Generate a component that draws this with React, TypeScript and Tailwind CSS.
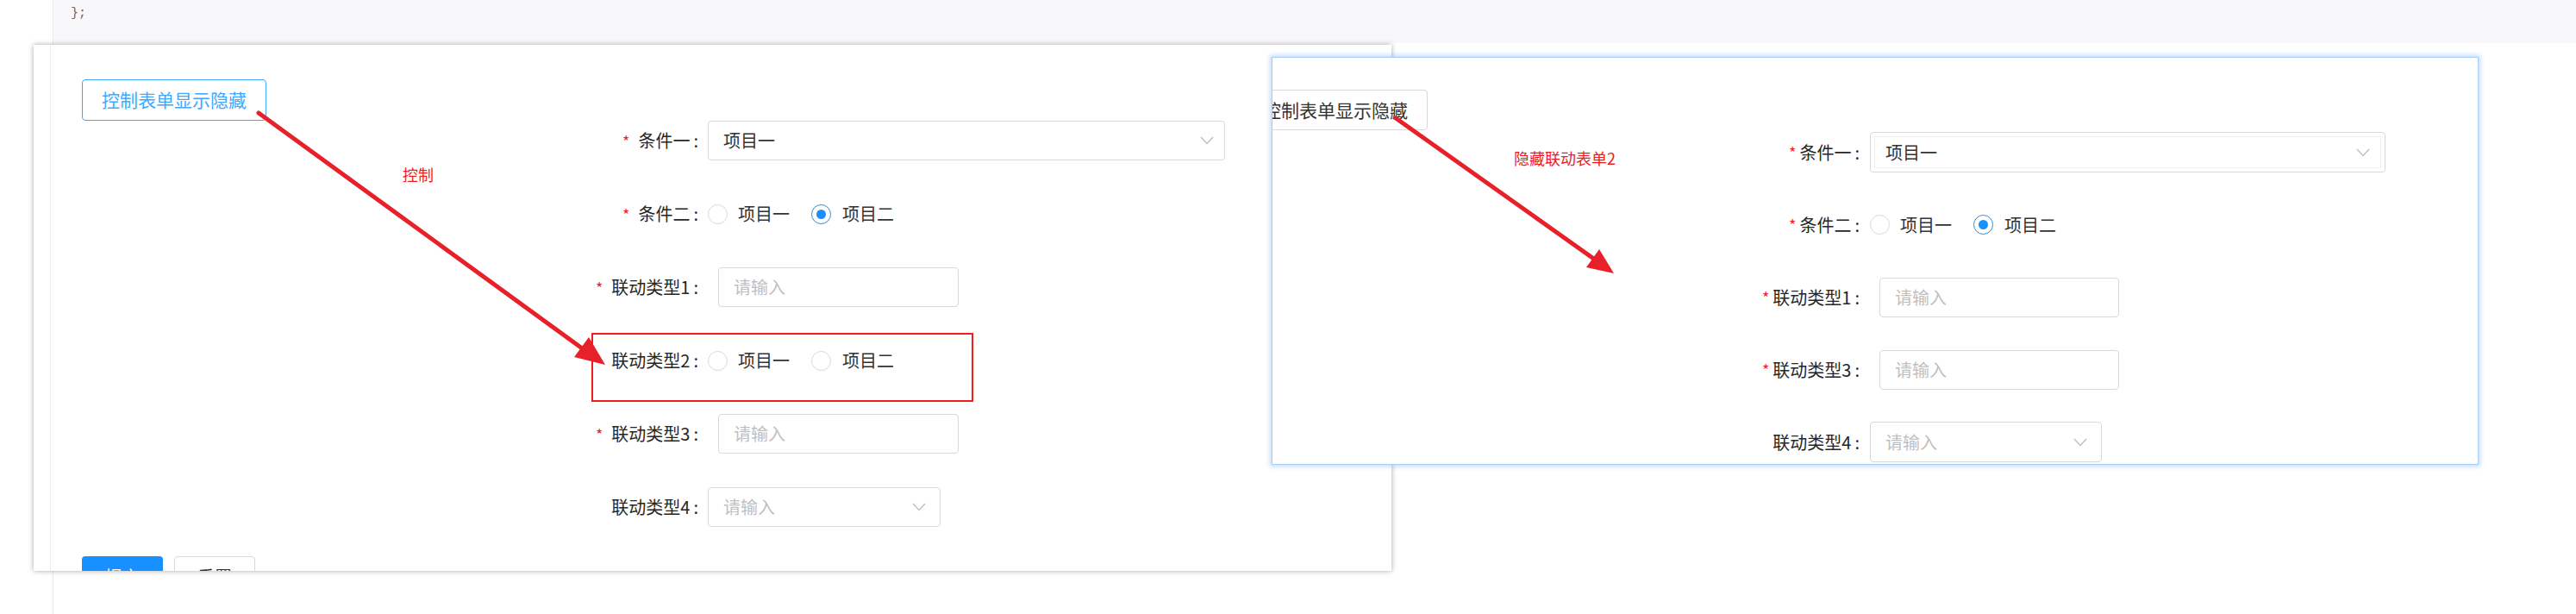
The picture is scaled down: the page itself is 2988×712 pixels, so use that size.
const Star = ({ gap }: { gap: string }) => (
  <span className={`text-[#f5222d] text-[18px] ${gap}`}>*</span>
);

const Chevron = () => (
  <svg width="16" height="10" viewBox="0 0 16 10" className="shrink-0">
    <polyline points="1,1 8,8.5 15,1" fill="none" stroke="#bfbfbf" strokeWidth="1.4" />
  </svg>
);

const Radio = ({ checked }: { checked?: boolean }) => (
  <span
    className={`w-[23px] h-[23px] rounded-full border flex items-center justify-center shrink-0 ${
      checked ? "border-[#1890ff] border-[1.5px]" : "border-[#d9d9d9]"
    }`}
  >
    {checked && <span className="w-[11px] h-[11px] rounded-full bg-[#1890ff]" />}
  </span>
);

const RadioGroup = ({ value }: { value?: number }) => (
  <div className="flex items-center text-[20px] text-[#333]">
    <Radio checked={value === 1} />
    <span className="ml-[12px]">项目一</span>
    <span className="ml-[25px]">
      <Radio checked={value === 2} />
    </span>
    <span className="ml-[13px]">项目二</span>
  </div>
);

const Card1Row = ({
  label,
  required,
  children,
}: {
  label: string;
  required?: boolean;
  children: React.ReactNode;
}) => (
  <div className="flex items-center h-[46px] shrink-0">
    <label className="w-[715px] flex justify-end items-center text-[20px] text-[#262626]">
      {required && <Star gap="mr-[10px]" />}
      <span>{label}</span>
      <span className="ml-[4px]">:</span>
    </label>
    <div className="ml-[11px]">{children}</div>
  </div>
);

const Card2Row = ({
  label,
  required,
  children,
}: {
  label: string;
  required?: boolean;
  children: React.ReactNode;
}) => (
  <div className="flex items-center h-[47px] shrink-0">
    <label className="w-[681px] flex justify-end items-center text-[20px] text-[#262626]">
      {required && <Star gap="mr-[4px]" />}
      <span>{label}</span>
      <span className="ml-[4px]">:</span>
    </label>
    <div className="ml-[12px]">{children}</div>
  </div>
);

export default function App() {
  return (
    <div className="relative w-[2988px] h-[712px] bg-white overflow-hidden font-['Noto_Sans_CJK_SC',sans-serif]">
      {/* doc page frame */}
      <div className="flex h-full">
        <div className="w-[61px] shrink-0" />
        <div className="flex-1 border-l border-[#ebebeb]">
          <div className="h-[50px] bg-[#f8f8fa] pl-[20px] pt-[5px] font-['Liberation_Mono',monospace] text-[15px] text-[#666]">
            {"};"}
          </div>
        </div>
      </div>

      {/* screenshot 1 */}
      <div className="absolute left-[39px] top-[52px] w-[1575px] h-[610px] bg-white overflow-hidden shadow-[0_0_6px_rgba(0,0,0,0.35)]">
        <div className="flex h-full">
          <div className="w-[20px] shrink-0 border-r border-[#ececec]" />
          <div className="flex flex-col pl-[36px] pt-[40px]">
            <button className="shrink-0 w-[214px] h-[48px] border-[1.5px] border-[#40a9ff] rounded-[4px] text-[21px] text-[#40a9ff] bg-white">
              控制表单显示隐藏
            </button>
            <div className="flex flex-col gap-[39px] shrink-0">
              <Card1Row label="条件一" required>
                <div className="w-[600px] h-[46px] border border-[#d9d9d9] rounded-[4px] flex items-center justify-between pl-[17px] pr-[12px] text-[20px] text-[#333]">
                  <span>项目一</span>
                  <Chevron />
                </div>
              </Card1Row>
              <Card1Row label="条件二" required>
                <RadioGroup value={2} />
              </Card1Row>
              <Card1Row label="联动类型1" required>
                <div className="pl-[12px]">
                  <div className="w-[279px] h-[46px] border border-[#d9d9d9] rounded-[4px] flex items-center pl-[17px] text-[20px] text-[#bfbfbf]">
                    请输入
                  </div>
                </div>
              </Card1Row>
              <Card1Row label="联动类型2">
                <RadioGroup />
              </Card1Row>
              <Card1Row label="联动类型3" required>
                <div className="pl-[12px]">
                  <div className="w-[279px] h-[46px] border border-[#d9d9d9] rounded-[4px] flex items-center pl-[17px] text-[20px] text-[#bfbfbf]">
                    请输入
                  </div>
                </div>
              </Card1Row>
              <Card1Row label="联动类型4">
                <div className="w-[270px] h-[46px] border border-[#d9d9d9] rounded-[4px] flex items-center justify-between pl-[17px] pr-[16px] text-[20px] text-[#bfbfbf]">
                  <span>请输入</span>
                  <Chevron />
                </div>
              </Card1Row>
            </div>
            <div className="flex gap-[13px] mt-[34px] shrink-0">
              <button className="w-[94px] h-[48px] rounded-[4px] bg-[#1890ff] text-white text-[20px]">提交</button>
              <button className="w-[94px] h-[48px] rounded-[4px] border border-[#d9d9d9] bg-white text-[#333] text-[20px]">
                重置
              </button>
            </div>
          </div>
        </div>
        <div className="absolute left-[647px] top-[334px] w-[443px] h-[80px] border-2 border-[#f21c1c]" />
      </div>

      {/* screenshot 2 */}
      <div className="absolute left-[1475px] top-[66px] w-[1400px] h-[473px] bg-white overflow-hidden border border-[#a8cdf6] shadow-[0_0_5px_2px_rgba(120,175,245,0.45)]">
        <div className="flex flex-col pt-[37px]">
          <button className="shrink-0 ml-[-34px] w-[214px] h-[47px] border border-[#d9d9d9] rounded-[4px] text-[21px] text-[#333] bg-white">
            控制表单显示隐藏
          </button>
          <div className="flex flex-col gap-[37px] mt-[2px] shrink-0">
            <Card2Row label="条件一" required>
              <div className="w-[598px] h-[47px] border border-[#d9d9d9] rounded-[4px] p-[4px]">
                <div className="h-full border border-[#f3f3f3] rounded-[3px] flex items-center justify-between pl-[12px] pr-[12px] text-[20px] text-[#333]">
                  <span>项目一</span>
                  <Chevron />
                </div>
              </div>
            </Card2Row>
            <Card2Row label="条件二" required>
              <RadioGroup value={2} />
            </Card2Row>
            <Card2Row label="联动类型1" required>
              <div className="pl-[11px]">
                <div className="w-[278px] h-[46px] border border-[#d9d9d9] rounded-[4px] flex items-center pl-[17px] text-[20px] text-[#bfbfbf]">
                  请输入
                </div>
              </div>
            </Card2Row>
            <Card2Row label="联动类型3" required>
              <div className="pl-[11px]">
                <div className="w-[278px] h-[46px] border border-[#d9d9d9] rounded-[4px] flex items-center pl-[17px] text-[20px] text-[#bfbfbf]">
                  请输入
                </div>
              </div>
            </Card2Row>
            <Card2Row label="联动类型4">
              <div className="w-[269px] h-[47px] border border-[#d9d9d9] rounded-[4px] flex items-center justify-between pl-[17px] pr-[16px] text-[20px] text-[#bfbfbf]">
                <span>请输入</span>
                <Chevron />
              </div>
            </Card2Row>
          </div>
        </div>
      </div>

      {/* annotations */}
      <span className="absolute left-[467px] top-[189px] text-[18px] leading-[26px] text-[#ed1c24]">控制</span>
      <span className="absolute left-[1756px] top-[170px] text-[18px] leading-[26px] text-[#ed1c24]">隐藏联动表单2</span>
      <svg className="absolute inset-0 pointer-events-none" width="2988" height="712">
        <line x1="300" y1="131" x2="678" y2="406" stroke="#e8202a" strokeWidth="5" strokeLinecap="round" />
        <polygon points="702,423 666,414 683,391" fill="#e8202a" />
        <line x1="1619" y1="137" x2="1850" y2="301" stroke="#e8202a" strokeWidth="5" strokeLinecap="round" />
        <polygon points="1872,317 1840,310 1855,289" fill="#e8202a" />
      </svg>
    </div>
  );
}
